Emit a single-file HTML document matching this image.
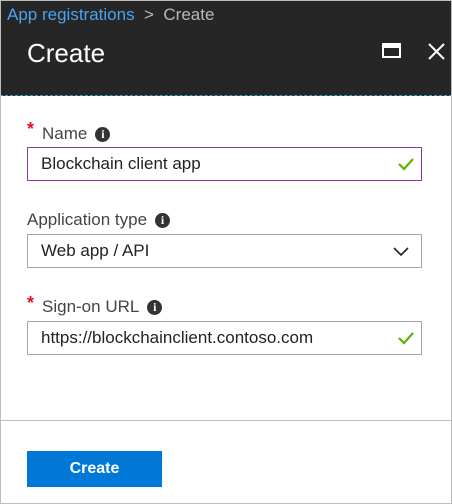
<!DOCTYPE html>
<html><head><style>
*{margin:0;padding:0;box-sizing:border-box}
body{width:452px;height:504px;background:#fff;font-family:"Liberation Sans",sans-serif;position:relative;overflow:hidden}
.frame{position:absolute;left:0;top:0;width:452px;height:504px;border:1px solid #bdbdbd}
.hdr{position:absolute;left:0;top:0;width:452px;height:96px;background:#262626;border-bottom:1px dashed #3aa0d8}
.crumb{position:absolute;left:7px;top:5px;font-size:17px;color:#4aa3ef;white-space:nowrap}
.crumb span{color:#b8b8b8}
.title{position:absolute;left:27px;top:38px;font-size:26px;color:#fff;font-weight:300}
.lbl{position:absolute;left:42px;font-size:17px;color:#444}
.ast{position:absolute;left:27px;color:#e81123;font-size:18px;font-weight:bold}
.info{display:inline-block;width:15px;height:15px;border-radius:50%;background:#333;color:#fff;font-size:12px;font-weight:bold;text-align:center;line-height:15px;margin-left:8px;vertical-align:1px;font-family:"Liberation Serif",serif}
.inp{position:absolute;left:27px;width:395px;height:34px;border:1px solid #a6a6a6;font-size:17px;color:#222;padding:6px 0 0 13px;white-space:nowrap}
.chk{position:absolute;right:7px;top:9px}
.div{position:absolute;left:0;top:420px;width:452px;height:1px;background:#bdbdbd}
.btn{position:absolute;left:27px;top:451px;width:135px;height:36px;background:#0078d7;color:#fff;font-size:16px;font-weight:bold;text-align:center;line-height:36px}
</style></head><body>
<div class="hdr">
<div class="crumb">App registrations &nbsp;<span>&gt;&nbsp; Create</span></div>
<div class="title">Create</div>
<svg style="position:absolute;left:382px;top:43px" width="20" height="16"><rect x="1" y="1" width="17" height="13" fill="none" stroke="#fff" stroke-width="2"/><rect x="1" y="1" width="17" height="4" fill="#fff"/></svg>
<svg style="position:absolute;left:428px;top:43px" width="17" height="17"><path d="M1 1L16 16M16 1L1 16" stroke="#fff" stroke-width="2"/></svg>
</div>
<div class="frame"></div>
<div class="ast" style="top:119px">*</div>
<div class="lbl" style="top:124px">Name<span class="info">i</span></div>
<div class="inp" style="top:147px;border-color:#8a3b9e">Blockchain client app<svg class="chk" width="16" height="14"><path d="M1 7L6 12L15 2" fill="none" stroke="#5db300" stroke-width="2.2"/></svg></div>
<div class="lbl" style="top:210px;left:27px">Application type<span class="info">i</span></div>
<div class="inp" style="top:234px">Web app / API<svg class="chk" width="16" height="12" style="top:11px;right:12px"><path d="M1 2L8 9L15 2" fill="none" stroke="#222" stroke-width="1.6"/></svg></div>
<div class="ast" style="top:293px">*</div>
<div class="lbl" style="top:297px">Sign-on URL<span class="info">i</span></div>
<div class="inp" style="top:321px">https://blockchainclient.contoso.com<svg class="chk" width="16" height="14"><path d="M1 7L6 12L15 2" fill="none" stroke="#5db300" stroke-width="2.2"/></svg></div>
<div class="div"></div>
<div class="btn">Create</div>
</body></html>
